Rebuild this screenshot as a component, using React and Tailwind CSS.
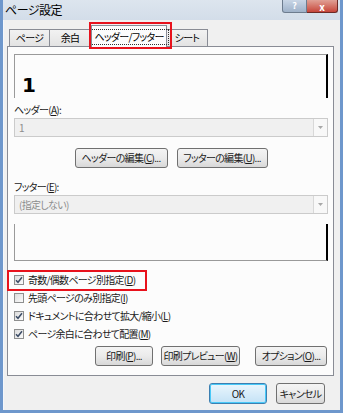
import React from 'react';

const jp = "font-['Meiryo_UI','Noto_Sans_CJK_JP',sans-serif] [font-feature-settings:'palt'] whitespace-nowrap";
const txt = 'text-[10px] tracking-[-0.7px] leading-none';

function Btn({ children, className = '' }) {
  return (
    <button
      type="button"
      className={`flex h-[20px] items-center justify-center rounded-[3px] border border-[#707070] bg-gradient-to-b from-[#f4f4f4] via-[#ebebeb] to-[#d8d8d8] ${txt} text-[#1a1a1a] ${className}`}
    >
      {children}
    </button>
  );
}

function Check({ checked, children }) {
  return (
    <label className="flex h-[18px] items-center gap-[4px]">
      <span className="flex h-[10px] w-[10px] items-center justify-center border border-[#8e8f8f] bg-gradient-to-br from-[#dcdcdc] to-[#fbfbfb]">
        {checked ? (
          <svg width="8" height="8" viewBox="0 0 8 8">
            <path d="M1 4.2 L3 6.3 L7 1.3" fill="none" stroke="#3c4c66" strokeWidth="1.5" />
          </svg>
        ) : null}
      </span>
      <span className={`${txt} text-[#1a1a1a]`}>{children}</span>
    </label>
  );
}

function Combo({ value }) {
  return (
    <div className="flex h-[19px] items-center justify-between border border-[#cbcbcb] bg-[#f0f0f0] pl-[4px]">
      <span className={`${txt} text-[#8d8d8d]`}>{value}</span>
      <span className="flex h-full w-[14px] items-center justify-center border-l border-[#d8d8d8] bg-[#f8f8f8]">
        <svg width="5" height="3" viewBox="0 0 5 3">
          <path d="M0 0 L5 0 L2.5 3 Z" fill="#a8a8a8" />
        </svg>
      </span>
    </div>
  );
}

const u = (c) => <span className="underline">{c}</span>;

export default function App() {
  return (
    <div className={`flex h-[413px] w-[343px] flex-col overflow-hidden border-x-[3px] border-b-[3px] border-[#6e97cc] bg-[#d9e4f1] ${jp}`}>
      {/* title bar */}
      <div className="relative -mx-[3px] flex h-[20px] items-center bg-gradient-to-b from-[#dde5ee] to-[#d3dde9] pl-[1px]">
        <span className="pl-[4px] text-[12px] tracking-[-0.5px] text-black">ページ設定</span>
        <div className="absolute right-[5px] top-0 flex">
          <span className="flex h-[13px] w-[25px] items-center justify-center rounded-bl-[3px] border border-t-0 border-[#6d7c8e] bg-gradient-to-b from-[#c9d6e6] to-[#9fb2c9] text-[9px] font-bold text-white">?</span>
          <span className="flex h-[13px] w-[31px] items-center justify-center rounded-br-[3px] border border-l-0 border-t-0 border-[#6d2a26] bg-gradient-to-b from-[#e0a095] to-[#c5443a] text-[10px] font-bold text-white">x</span>
        </div>
      </div>

      {/* client */}
      <div className="flex flex-1 flex-col border-l border-[#f4f7fb] bg-[#f0f0f0] pl-[3px] pr-[6px] pt-[4px]">
        {/* tabs */}
        <div className="relative z-10 flex h-[22px] items-end pl-[2px]">
          <div className={`flex h-[17px] w-[41px] items-center justify-center border border-b-0 border-[#898c95] bg-gradient-to-b from-[#f2f2f2] to-[#e3e3e3] ${txt}`}>ページ</div>
          <div className={`flex h-[17px] w-[41px] items-center justify-center border border-b-0 border-l-0 border-[#898c95] bg-gradient-to-b from-[#f2f2f2] to-[#e3e3e3] ${txt}`}>余白</div>
          <div className="relative -mb-[1px] flex h-[22px] w-[76px] items-center justify-center border border-b-0 border-[#898c95] bg-[#fcfcfc]">
            <span className={`border border-dotted border-[#333] px-[4px] py-[2px] ${txt}`}>ヘッダー/フッター</span>
            <span className="pointer-events-none absolute -left-[3px] -top-[4px] h-[27px] w-[83px] border-2 border-[#e8121c]" />
          </div>
          <div className={`flex h-[17px] w-[41px] items-center justify-center border border-b-0 border-l-0 border-[#898c95] bg-gradient-to-b from-[#f2f2f2] to-[#e3e3e3] ${txt}`}>シート</div>
        </div>

        {/* panel */}
        <div className="flex h-[330px] flex-col border border-[#898c95] bg-[#fcfcfc] pl-[6px] pr-[5px] pt-[7px]">
          <div className="flex h-[44px] items-end border-l border-t border-[#9a9a9a] border-r-2 border-r-black pb-[3px] pl-[7px]">
            <span className="text-[20px] font-black leading-none text-black [font-family:'DejaVu_Sans',sans-serif]">1</span>
          </div>

          <div className={`mt-[7px] h-[13px] ${txt} text-[#1a1a1a]`}>ヘッダー({u('A')}):</div>
          <Combo value="1" />

          <div className="mt-[11px] flex justify-center gap-[9px]">
            <Btn className="w-[93px]">ヘッダーの編集({u('C')})...</Btn>
            <Btn className="w-[91px]">フッターの編集({u('U')})...</Btn>
          </div>

          <div className={`mt-[14px] h-[13px] ${txt} text-[#1a1a1a]`}>フッター({u('E')}):</div>
          <Combo value="(指定しない)" />

          <div className="mt-[10px] h-[37px] border-b border-l border-[#9a9a9a] border-r-2 border-r-black" />

          <div className="mt-[10px] flex flex-col">
            <div className="relative">
              <Check checked>奇数/偶数ページ別指定({u('D')})</Check>
              <span className="pointer-events-none absolute -left-[7px] -top-[1px] h-[21px] w-[140px] border-2 border-[#e8121c]" />
            </div>
            <Check>先頭ページのみ別指定({u('I')})</Check>
            <Check checked>ドキュメントに合わせて拡大/縮小({u('L')})</Check>
            <Check checked>ページ余白に合わせて配置({u('M')})</Check>
          </div>

          <div className="mt-[3px] flex justify-end pr-[1px]">
            <Btn className="w-[58px]">印刷({u('P')})...</Btn>
            <Btn className="ml-[8px] w-[79px]">印刷プレビュー({u('W')})</Btn>
            <Btn className="ml-[15px] w-[72px]">オプション({u('O')})...</Btn>
          </div>
        </div>

        {/* footer buttons */}
        <div className="mt-[7px] flex justify-end pr-[9px]">
          <button type="button" className={`flex h-[21px] w-[58px] items-center justify-center rounded-[3px] border border-[#3c7fb1] bg-gradient-to-b from-[#eaf6fd] to-[#c4e2f6] ${txt} text-[#1a1a1a] shadow-[inset_0_0_0_1px_#48c9f8]`}>OK</button>
          <Btn className="ml-[9px] h-[21px] w-[49px]">キャンセル</Btn>
        </div>
      </div>
    </div>
  );
}
